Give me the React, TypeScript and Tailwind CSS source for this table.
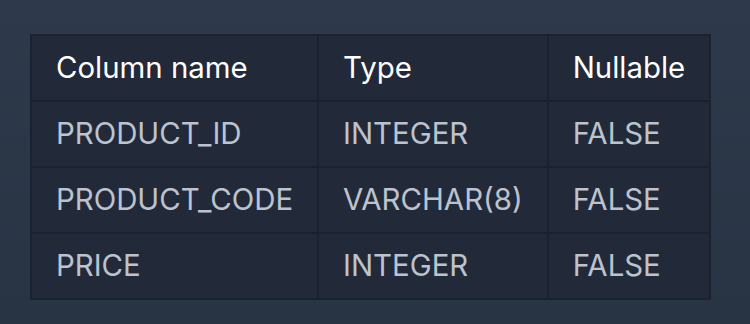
import React from 'react'

interface ColumnInfo {
    name: string
    type: string
    nullable: string
}

const columns: ColumnInfo[] = [
    { name: 'PRODUCT_ID', type: 'INTEGER', nullable: 'FALSE' },
    { name: 'PRODUCT_CODE', type: 'VARCHAR(8)', nullable: 'FALSE' },
    { name: 'PRICE', type: 'INTEGER', nullable: 'FALSE' },
]

const cell = 'border-2 border-[#1a2230] px-6 py-4 text-left font-normal whitespace-nowrap'

export default function App() {
    return (
        <div
            className="min-h-[324px] bg-gradient-to-b from-[#2e3a4b] to-[#283444] pl-[30px] pt-[34px]"
            style={{ fontFamily: 'Inter, "Noto Sans", sans-serif' }}
        >
            <table className="border-collapse border-2 border-[#1a2230] bg-[#222a3a] text-[29.4px] leading-8">
                <thead>
                    <tr className="text-white">
                        <th className={cell}>Column name</th>
                        <th className={cell}>Type</th>
                        <th className={cell}>Nullable</th>
                    </tr>
                </thead>
                <tbody>
                    {columns.map((col) => (
                        <tr key={col.name} className="text-[#bcc3ce]">
                            <td className={cell}>{col.name}</td>
                            <td className={cell}>{col.type}</td>
                            <td className={cell}>{col.nullable}</td>
                        </tr>
                    ))}
                </tbody>
            </table>
        </div>
    )
}
